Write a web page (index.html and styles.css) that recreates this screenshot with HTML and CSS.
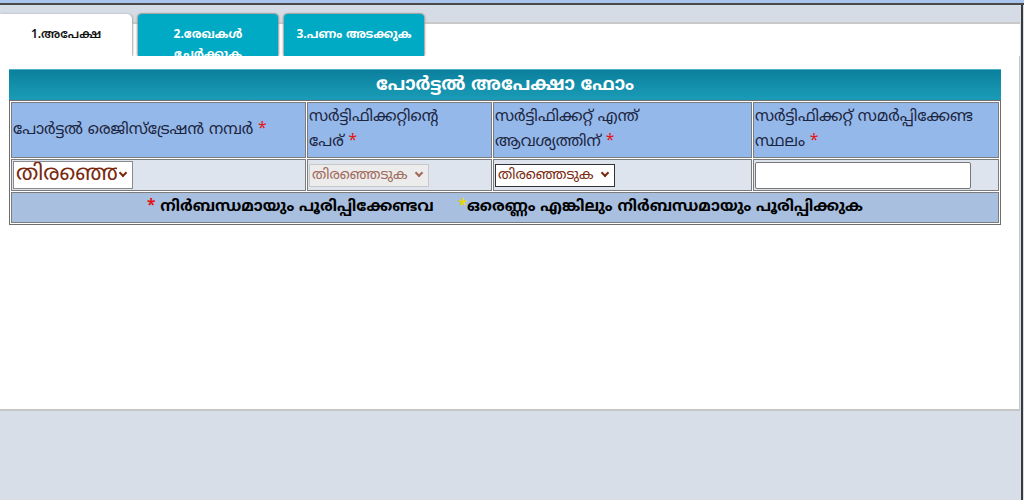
FILE: index.html
```html
<!DOCTYPE html>
<html lang="ml">
<head>
<meta charset="utf-8">
<title>പോർട്ടൽ അപേക്ഷാ ഫോം</title>
<link rel="stylesheet" href="styles.css">
</head>
<body>
<div class="topstrip"></div>
<div class="window">
  <div class="frame">
    <div class="tabs">
      <div class="tab tab-active">1.അപേക്ഷ</div>
      <div class="tab">2.രേഖകൾ ചേർക്കുക</div>
      <div class="tab tab-wide">3.പണം അടക്കുക</div>
    </div>
    <div class="panel">
      <div class="form-title">പോർട്ടൽ അപേക്ഷാ ഫോം</div>
      <table class="form">
        <colgroup>
          <col class="c1"><col class="c2"><col class="c3"><col class="c4">
        </colgroup>
        <tr class="head">
          <td>പോർട്ടൽ രെജിസ്‌ട്രേഷൻ നമ്പർ <span class="req">*</span></td>
          <td>സർട്ടിഫിക്കറ്റിന്റെ<br>പേര് <span class="req">*</span></td>
          <td>സർട്ടിഫിക്കറ്റ് എന്ത്<br>ആവശ്യത്തിന് <span class="req">*</span></td>
          <td>സർട്ടിഫിക്കറ്റ് സമർപ്പിക്കേണ്ട<br>സ്ഥലം <span class="req">*</span></td>
        </tr>
        <tr class="inputs">
          <td><div class="sel sel-big"><span class="sel-text">തിരഞ്ഞെ:</span><span class="chev"></span></div></td>
          <td><div class="sel sel-off"><span class="sel-text">തിരഞ്ഞെടുക</span><span class="chev"></span></div></td>
          <td><div class="sel sel-small"><span class="sel-text">തിരഞ്ഞെടുക</span><span class="chev"></span></div></td>
          <td><div class="textbox"></div></td>
        </tr>
        <tr class="note">
          <td colspan="4"><span class="req">*</span> നിർബന്ധമായും പൂരിപ്പിക്കേണ്ടവ <span class="gap"></span><span class="req-y">*</span>ഒരെണ്ണം എങ്കിലും നിർബന്ധമായും പൂരിപ്പിക്കുക</td>
        </tr>
      </table>
    </div>
  </div>
  <div class="side"></div>
</div>
</body>
</html>
```
FILE: styles.css
```css
html, body {
  margin: 0;
  padding: 0;
}
body {
  background: #d8dee7;
  font-family: "Noto Sans Malayalam", "Noto Sans", "DejaVu Sans", sans-serif;
  width: 1024px;
  height: 500px;
  overflow: hidden;
}
.topstrip {
  height: 3px;
  background: #aac5ec;
  border-bottom: 2px solid #4a4a4a;
}
.window {
  display: flex;
  height: 495px;
}
.frame {
  width: 1020px;
  display: flex;
  flex-direction: column;
}
.side {
  width: 2px;
  margin-left: 1px;
  background: #3a3a3a;
}
.tabs {
  display: flex;
  gap: 6px;
  height: 42px;
  padding-top: 9px;
  background: linear-gradient(#d5dce5 0, #d5dce5 17px, #c9c9c9 17px, #c9c9c9 19px, #ffffff 19px);
}
.tab {
  width: 140px;
  height: 42px;
  box-sizing: border-box;
  overflow: hidden;
  background: #00aac4;
  color: #ffffff;
  font-size: 12px;
  font-weight: bold;
  line-height: 20px;
  text-align: center;
  padding: 12px 30px 0;
  border-radius: 4px 4px 0 0;
  box-shadow: -1px 0 2px #9a9a9a, 1px 0 2px #9a9a9a, 0 -1px 1px #b0b0b0;
}
.tab-wide {
  padding: 12px 4px 0;
}
.tab-active {
  width: 132px;
  background: #ffffff;
  color: #111111;
  font-weight: 600;
  padding: 12px 4px 0;
  border-radius: 0 5px 0 0;
  box-shadow: 1px 0 2px #a8a8a8;
}
.panel {
  background: #ffffff;
  height: 355px;
  border-bottom: 2px solid #c6c6c6;
  border-right: 1px solid #c8c8c8;
  padding: 13px 0 0 9px;
  box-sizing: border-box;
}
.form-title {
  width: 992px;
  height: 31px;
  box-sizing: border-box;
  background: linear-gradient(#0b7f9c, #138fab 50%, #1a9bb7);
  border-top: 1px solid #4fb1c6;
  color: #ffffff;
  font-weight: bold;
  font-size: 18px;
  line-height: 31px;
  text-align: center;
}
.form {
  width: 992px;
  border-collapse: separate;
  border-spacing: 1px;
  border: 1px solid #6e6e6e;
  background: #ffffff;
  table-layout: fixed;
}
.c1 { width: 295px; }
.c2 { width: 185px; }
.c3 { width: 259px; }
.c4 { width: 246px; }
.form td {
  border: 1px solid #7c7c7c;
  padding: 0 1px;
  font-size: 15.6px;
  color: #1b2540;
  vertical-align: middle;
}
.head td {
  background: #95b8ea;
  height: 54px;
  line-height: 25px;
}
.inputs td {
  background: #dde4ee;
  height: 30px;
  padding: 0 1px;
}
.note td {
  background: #a8bfdf;
  height: 29px;
  text-align: center;
  font-weight: bold;
  font-size: 15.5px;
  color: #000000;
}
.req {
  color: #e41414;
}
.req-y {
  color: #e8d800;
}
.gap {
  display: inline-block;
  width: 20px;
}
.sel {
  display: flex;
  align-items: center;
  width: 120px;
  box-sizing: border-box;
  background: #ffffff;
  border: 1px solid #8a8a8a;
  color: #7a2a10;
  overflow: hidden;
  white-space: nowrap;
}
.sel-text {
  flex: 1;
  overflow: hidden;
}
.sel-big {
  height: 28px;
  font-size: 22px;
  line-height: 26px;
  padding-left: 2px;
}
.sel-off {
  height: 23px;
  font-size: 14px;
  line-height: 21px;
  color: #a06a5a;
  background: #ececec;
  border-color: #c8c8c8;
  padding-left: 2px;
}
.sel-small {
  height: 23px;
  font-size: 14px;
  line-height: 21px;
  border-color: #333333;
  padding-left: 2px;
}
.chev {
  width: 4px;
  height: 4px;
  border-right: 2px solid #7a2a10;
  border-bottom: 2px solid #7a2a10;
  transform: rotate(45deg);
  margin: 0 6px 4px 3px;
  flex: none;
}
.sel-off .chev {
  border-color: #a06a5a;
}
.textbox {
  width: 216px;
  height: 27px;
  box-sizing: border-box;
  background: #ffffff;
  border: 1px solid #777777;
  border-radius: 2px;
}
```
